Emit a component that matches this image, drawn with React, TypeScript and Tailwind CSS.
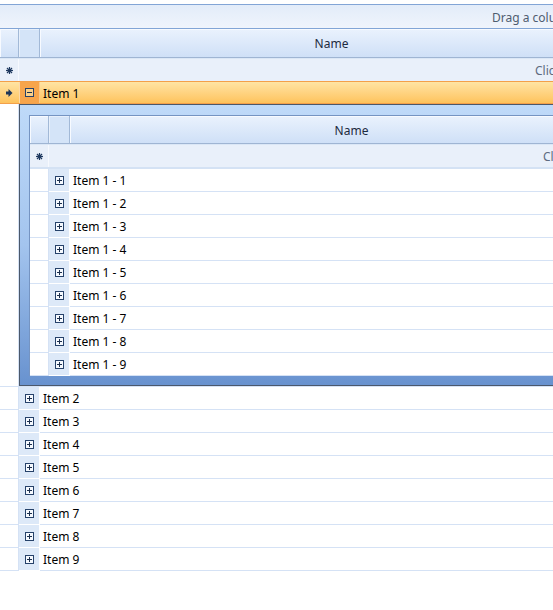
import React from 'react'

const items = [1, 2, 3, 4, 5, 6, 7, 8, 9]

function ToggleBox({ open = false }: { open?: boolean }) {
  return (
    <svg width="9" height="9" viewBox="0 0 9 9" className="block">
      <rect x="0.5" y="0.5" width="8" height="8" fill={open ? '#fbd08a' : '#f5f9fe'} stroke="#26426a" />
      <line x1="2" y1="4.5" x2="7" y2="4.5" stroke="#1b2f4d" />
      {!open && <line x1="4.5" y1="2" x2="4.5" y2="7" stroke="#1b2f4d" />}
    </svg>
  )
}

function Star() {
  return (
    <svg width="7" height="7" viewBox="0 0 7 7" className="block">
      <g stroke="#1f3a60" strokeWidth="1.2">
        <line x1="3.5" y1="0" x2="3.5" y2="7" />
        <line x1="0" y1="3.5" x2="7" y2="3.5" />
        <line x1="1" y1="1" x2="6" y2="6" />
        <line x1="1" y1="6" x2="6" y2="1" />
      </g>
    </svg>
  )
}

function Arrow() {
  return (
    <svg width="7" height="8" viewBox="0 0 7 8" className="block">
      <rect x="0" y="2.5" width="3" height="3" fill="#1e3658" />
      <polygon points="2.5,0 6.5,4 2.5,8" fill="#1e3658" />
    </svg>
  )
}

// header row: indicator, expander, Name
function HeaderRow({ nameWidth, height }: { nameWidth: string; height: string }) {
  const cell = 'bg-gradient-to-b from-[#eaf2fd] to-[#cfe0f7] border-r border-[#a2b9d7] shadow-[inset_1px_1px_0_#f7faff]'
  return (
    <div className={`flex ${height}`}>
      <div className={`w-[19px] shrink-0 ${cell}`} />
      <div className={`w-[21px] shrink-0 bg-[#d4e4f8] border-r border-[#a2b9d7] shadow-[inset_1px_1px_0_#e6effb]`} />
      <div className={`${nameWidth} shrink-0 ${cell} flex items-center justify-center pt-[2px] text-[#1d2b3e]`}>Name</div>
    </div>
  )
}

function NewRow({ pad }: { pad: string }) {
  return (
    <div className="flex h-[22px] bg-[#e9f0fa]">
      <div className="w-[19px] shrink-0 border-r border-[#f6f9fe] flex items-center justify-center">
        <Star />
      </div>
      <div className={`flex-1 flex items-center pt-[2px] ${pad} whitespace-nowrap text-[#5d6b80]`}>
        Click here to add a new row
      </div>
    </div>
  )
}

function DataRow({ label }: { label: string }) {
  return (
    <div className="flex h-[23px]">
      <div className="w-[19px] shrink-0 bg-white border-r border-b border-[#d5e2f5]" />
      <div className="w-[21px] shrink-0 bg-[#dde9f8] border-r border-b border-white flex items-center justify-center">
        <ToggleBox />
      </div>
      <div className="flex-1 bg-white border-b border-[#d5e2f5] flex items-center pt-[2px] pl-[3px] text-black whitespace-nowrap">
        {label}
      </div>
    </div>
  )
}

export default function App() {
  return (
    <div className="w-[553px] h-[610px] bg-white overflow-hidden font-['Noto_Sans','Liberation_Sans',sans-serif] text-[12px] leading-none">
      <div className="w-[624px]">
        <div className="h-[4px]" />
        {/* group panel */}
        <div className="h-[25px] border-y border-[#82a5d6] bg-gradient-to-b from-[#e3ecf9] to-[#eff4fc] flex items-center pt-[2px] pl-[492px] whitespace-nowrap text-[#4f5d70]">
          Drag a column header here to group by that column
        </div>

        <HeaderRow nameWidth="w-[584px]" height="h-[29px] border-b border-[#9fb5d3]" />
        <div className="h-px bg-[#dbe7f6]" />
        <NewRow pad="pl-[516px]" />

        {/* selected row */}
        <div className="flex h-[23px] border-y border-[#f3a04a] bg-gradient-to-b from-[#ffe4a3] to-[#fec35c]">
          <div className="w-[19px] shrink-0 flex items-center justify-center">
            <Arrow />
          </div>
          <div className="w-[21px] shrink-0 bg-[#f7a54c] border-l border-[#fcd9a8] border-r border-r-[#f9c98a] flex items-center justify-center">
            <ToggleBox open />
          </div>
          <div className="flex-1 flex items-center pt-[2px] pl-[3px] text-black">Item 1</div>
        </div>

        {/* detail */}
        <div className="flex">
          <div className="w-[19px] shrink-0 bg-white border-r border-b border-[#d5e2f5]" />
          <div className="flex-1 border-b border-[#d5e2f5]">
            <div className="border border-r-0 border-[#4b586b] bg-gradient-to-b from-[#bfdaf9] via-[#a3c4ee] to-[#6892cf] pt-[10px] pl-[9px] pb-[9px]">
              <div className="border-t border-l border-[#7594c2] bg-white">
                <HeaderRow nameWidth="w-[564px]" height="h-[28px] border-b border-[#9fb5d3]" />
                <div className="h-px bg-[#dbe7f6]" />
                <NewRow pad="pl-[494px]" />
                <div className="h-[2px] bg-[#d4e2f4]" />
                {items.map((n) => (
                  <DataRow key={n} label={`Item 1 - ${n}`} />
                ))}
              </div>
            </div>
          </div>
        </div>

        {items.slice(1).map((n) => (
          <DataRow key={n} label={`Item ${n}`} />
        ))}
      </div>
    </div>
  )
}
